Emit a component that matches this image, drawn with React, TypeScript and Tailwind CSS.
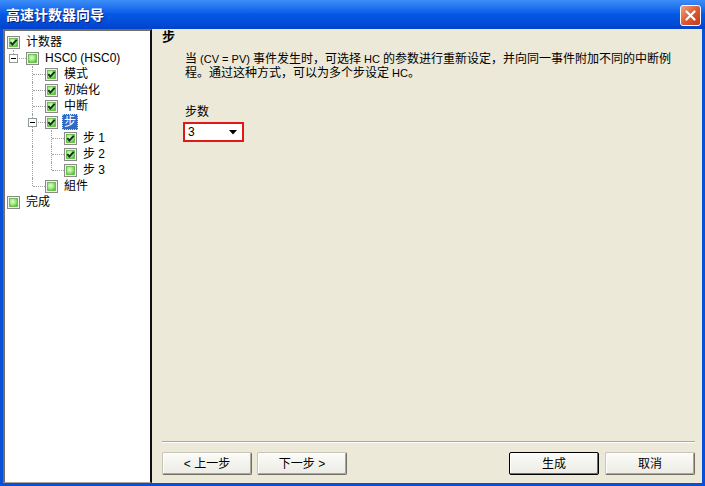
import React from "react";

const FONT = '"Liberation Sans", "Noto Sans CJK SC", sans-serif';

type Cell = "none" | "vert" | "tee" | "elbow";
type Row = {
  label: string;
  cells: Cell[];
  checked: boolean;
  expander?: boolean;
  selected?: boolean;
};

const rows: Row[] = [
  { label: "计数器", cells: [], checked: true },
  { label: "HSC0 (HSC0)", cells: ["elbow"], checked: false, expander: true },
  { label: "模式", cells: ["none", "tee"], checked: true },
  { label: "初始化", cells: ["none", "tee"], checked: true },
  { label: "中断", cells: ["none", "tee"], checked: true },
  { label: "步", cells: ["none", "tee"], checked: true, expander: true, selected: true },
  { label: "步 1", cells: ["none", "vert", "tee"], checked: true },
  { label: "步 2", cells: ["none", "vert", "tee"], checked: true },
  { label: "步 3", cells: ["none", "vert", "elbow"], checked: false },
  { label: "組件", cells: ["none", "elbow"], checked: false },
  { label: "完成", cells: [], checked: false },
];

function Check({ checked }: { checked: boolean }) {
  return (
    <svg width="13" height="13" viewBox="0 0 13 13" className="shrink-0">
      <defs>
        <radialGradient id="gfill" cx="0.4" cy="0.4" r="0.7">
          <stop offset="0" stopColor="#e4fcd4" />
          <stop offset="0.55" stopColor="#9ee67c" />
          <stop offset="1" stopColor="#48bd30" />
        </radialGradient>
      </defs>
      <rect x="0.5" y="0.5" width="12" height="12" fill="#f2f2f0" stroke="#8a8a8a" />
      <rect x="2.5" y="2.5" width="8" height="8" fill="url(#gfill)" stroke="#5cb844" strokeWidth="0.8" />
      {checked && (
        <path d="M3.3 6.2 L5.4 8.5 L9.7 3.9" fill="none" stroke="#16301a" strokeWidth="1.9" />
      )}
    </svg>
  );
}

function TreeCell({ type, expander }: { type: Cell; expander?: boolean }) {
  return (
    <div className="relative w-[19px] h-[16px] shrink-0">
      {(type === "vert" || type === "tee") && (
        <div className="absolute left-[6px] top-0 h-[16px] border-l border-dotted border-[#a0a0a0]" />
      )}
      {type === "elbow" && (
        <div className="absolute left-[6px] top-0 h-[8px] border-l border-dotted border-[#a0a0a0]" />
      )}
      {(type === "tee" || type === "elbow") && (
        <div className="absolute left-[7px] top-[8px] w-[12px] border-t border-dotted border-[#a0a0a0]" />
      )}
      {expander && (
        <div className="absolute left-[2px] top-[4px] w-[9px] h-[9px] border border-[#919b9c] bg-white flex items-center justify-center">
          <div className="w-[5px] h-px bg-black" />
        </div>
      )}
    </div>
  );
}

function Btn({ children, def }: { children: React.ReactNode; def?: boolean }) {
  return (
    <div
      className={
        "w-[90px] h-[23px] flex items-center justify-center text-[12px] text-black rounded-[2px] bg-gradient-to-b from-[#fbfbf8] to-[#ecebe4] " +
        (def
          ? "border border-black shadow-[inset_-1px_-1px_0_#716f64,inset_1px_1px_0_#ffffff]"
          : "border border-[#c8c5b8] border-r-[#716f64] border-b-[#716f64] shadow-[inset_-1px_-1px_0_#aca899,inset_1px_1px_0_#ffffff]")
      }
    >
      {children}
    </div>
  );
}

function L({ children }: { children: React.ReactNode }) {
  return <span className="text-[11px]">{children}</span>;
}

export default function App() {
  return (
    <div className="w-[705px] h-[486px] flex flex-col overflow-hidden" style={{ fontFamily: FONT }}>
      {/* title bar */}
      <div className="h-[29px] shrink-0 flex items-center justify-between pl-[6px] pr-[4px] bg-gradient-to-b from-[#3d8ef8] via-[#0558e6] to-[#0143cc]">
        <span className="text-white font-bold text-[14px] leading-none [text-shadow:1px_1px_0_#0a1e7a]">
          高速计数器向导
        </span>
        <div className="w-[21px] h-[21px] mt-[2px] rounded-[3px] border border-white bg-gradient-to-br from-[#f0a080] via-[#dc5a34] to-[#c03a18] flex items-center justify-center">
          <svg width="11" height="11" viewBox="0 0 11 11">
            <path d="M1.5 1.5 L9.5 9.5 M9.5 1.5 L1.5 9.5" stroke="#fff" strokeWidth="2.2" strokeLinecap="round" />
          </svg>
        </div>
      </div>
      {/* body */}
      <div className="flex-1 flex bg-[#0a4fd8] px-[3px] pb-[3px] min-h-0">
        <div className="flex-1 flex bg-[#ece9d8] min-h-0">
          {/* tree panel */}
          <div className="w-[149px] shrink-0 bg-white border-l-2 border-t-2 border-r-2 border-b border-l-[#716f64] border-t-[#716f64] border-r-[#111111] border-b-[#aca899] pt-[3px] pl-[2px]">
            {rows.map((r, i) => (
              <div key={i} className="flex items-center h-[16px] text-[12px] leading-none text-black">
                {r.cells.map((c, j) => (
                  <TreeCell key={j} type={c} expander={r.expander && j === r.cells.length - 1} />
                ))}
                <Check checked={r.checked} />
                {r.selected ? (
                  <span className="ml-[4px] h-[16px] px-[1px] flex items-center bg-[#316ac5] text-white border border-dotted border-[#c8d8f8]">
                    {r.label}
                  </span>
                ) : (
                  <span className="ml-[6px] whitespace-nowrap">{r.label}</span>
                )}
              </div>
            ))}
          </div>
          {/* content */}
          <div className="flex-1 flex flex-col pl-[10px] pr-[7px] text-[12px] text-black">
            <div className="font-bold text-[13px] leading-none mt-[1px] h-[14px]">步</div>
            <div className="pl-[23px] mt-[8px] leading-[14px] whitespace-nowrap">
              当<L> (CV = PV) </L>事件发生时，可选择<L> HC </L>的参数进行重新设定，并向同一事件附加不同的中断例
              <br />
              程。通过这种方式，可以为多个步设定<L> HC</L>。
            </div>
            <div className="pl-[23px] mt-[26px] leading-none">步数</div>
            <div className="pl-[21px] mt-[4px]">
              <div className="w-[61px] h-[20px] border-2 border-[#e01818] bg-white flex items-center justify-between pl-[3px] pr-[5px]">
                <span className="text-[12px] leading-none">3</span>
                <svg width="8" height="5" viewBox="0 0 8 5">
                  <path d="M0 0 H8 L4 4.5 Z" fill="#000" />
                </svg>
              </div>
            </div>
            <div className="flex-1" />
            <div className="h-[2px] border-t border-[#aca899] border-b border-b-white" />
            <div className="flex items-center mt-[9px] mb-[8px]">
              <Btn>&lt; 上一步</Btn>
              <div className="w-[5px]" />
              <Btn>下一步 &gt;</Btn>
              <div className="flex-1" />
              <Btn def>生成</Btn>
              <div className="w-[6px]" />
              <Btn>取消</Btn>
            </div>
          </div>
        </div>
      </div>
    </div>
  );
}
